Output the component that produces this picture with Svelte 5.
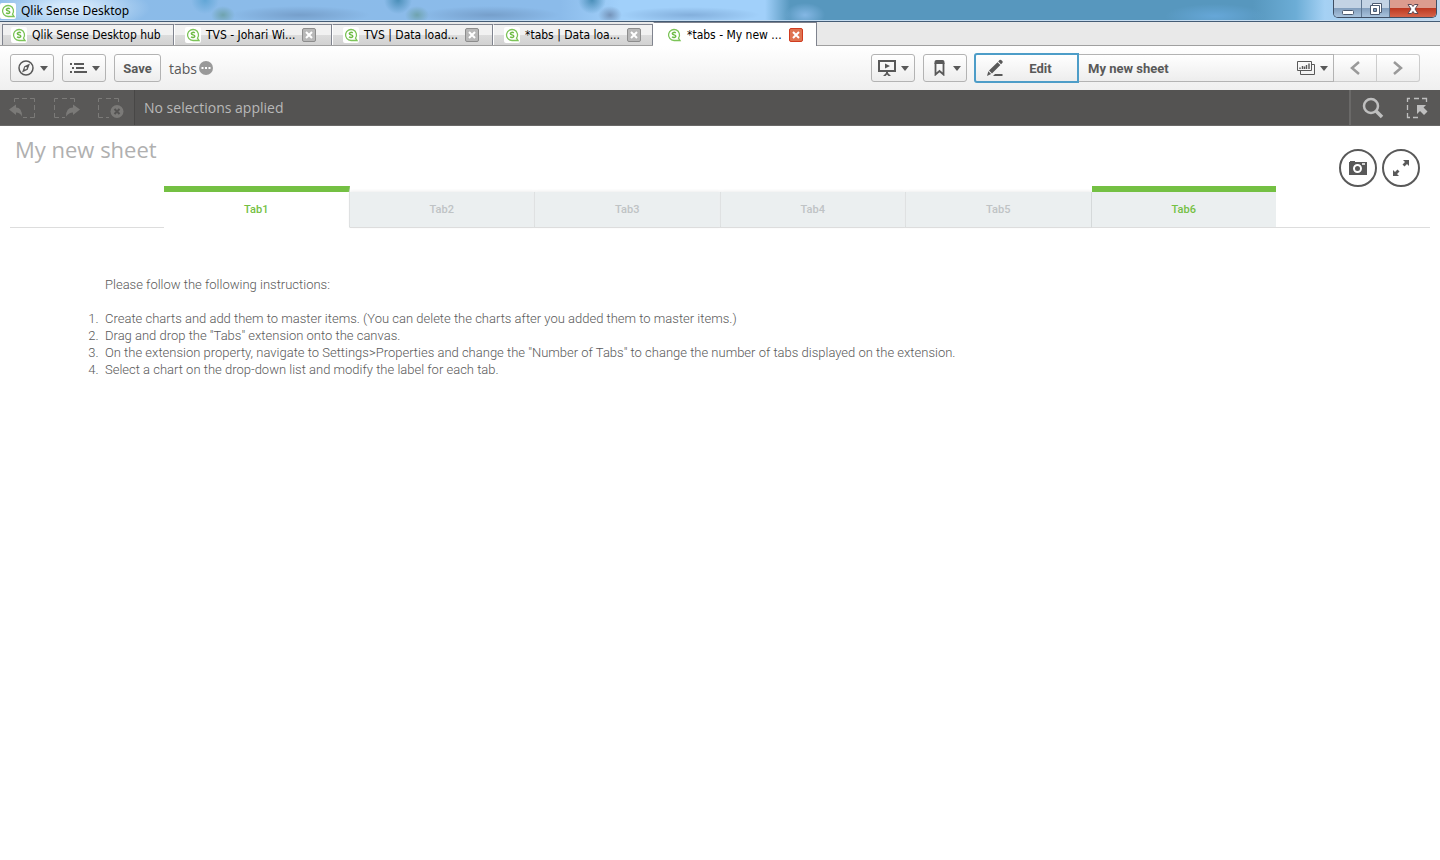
<script>
    const winTabs = [
        { label: "Qlik Sense Desktop hub", width: 172 },
        { label: "TVS - Johari Wi...", width: 158, close: true },
        { label: "TVS | Data load...", width: 161, close: true },
        { label: "*tabs | Data loa...", width: 160, close: true },
        { label: "*tabs - My new ...", width: 164, close: true, active: true },
    ];
    const sheetTabs = ["Tab1", "Tab2", "Tab3", "Tab4", "Tab5", "Tab6"];
    const steps = [
        "Create charts and add them to master items. (You can delete the charts after you added them to master items.)",
        'Drag and drop the "Tabs" extension onto the canvas.',
        'On the extension property, navigate to Settings>Properties and change the "Number of Tabs" to change the number of tabs displayed on the extension.',
        "Select a chart on the drop-down list and modify the label for each tab.",
    ];
    let selected = $state("Tab1");
    let hovered = $state("Tab6");
</script>

{#snippet logo()}
    <svg width="16" height="16" viewBox="0 0 16 16" aria-hidden="true">
        <rect width="16" height="16" rx="2" fill="#fff" />
        <path d="M14 13.500H8A5.500 5.500 0 1 1 12.500 11.200L14 13.500Z" fill="none" stroke="#7cc458" stroke-width="1.300" />
        <path d="M9.800 5.900C8.600 5 6.300 5.200 6.300 6.600c0 1.600 3.500.9 3.500 2.600 0 1.500-2.600 1.600-3.700.6" fill="none" stroke="#6cbb43" stroke-width="1.500" />
    </svg>
{/snippet}

{#snippet caret()}
    <svg width="8" height="5" viewBox="0 0 8 5" aria-hidden="true"><path d="M0 0h8L4 5z" fill="#595959" /></svg>
{/snippet}

<header class="titlebar">
    {@render logo()}
    <span class="title">Qlik Sense Desktop</span>
    <div class="controls">
        <button aria-label="Minimize">
            <svg width="14" height="14" viewBox="0 0 14 14"><rect x="1.500" y="8.500" width="11" height="4" rx="1" fill="#fff" stroke="#4d5b70" /></svg>
        </button>
        <button aria-label="Restore">
            <svg width="14" height="14" viewBox="0 0 14 14">
                <path d="M3.500 1.500h9v9h-9z" fill="#fff" stroke="#4d5b70" />
                <path d="M1.500 3.500h9v9h-9z" fill="#fff" stroke="#4d5b70" />
                <path d="M4.500 6.500h3v3h-3z" fill="#7f9dbd" stroke="#4d5b70" />
            </svg>
        </button>
        <button class="exit" aria-label="Close">
            <svg width="14" height="14" viewBox="0 0 14 14"><path d="M2 2.500h3.500L7 4.500l1.500-2H12L9 7l3 4.500H8.500L7 9.500l-1.500 2H2L5 7z" fill="#fff" stroke="#5c4a55" /></svg>
        </button>
    </div>
</header>

<nav class="wintabs">
    {#each winTabs as tab}
        <div class="wintab" class:active={tab.active} style="width: {tab.width}px">
            {@render logo()}
            <a href="#top">{tab.label}</a>
            {#if tab.close}
                <button aria-label="Close tab">
                    <svg width="8" height="8" viewBox="0 0 8 8"><path d="M1 1l6 6M7 1L1 7" stroke="#fff" stroke-width="2" /></svg>
                </button>
            {/if}
        </div>
    {/each}
</nav>

<div class="toolbar">
    <button class="btn" aria-label="Navigation">
        <svg width="16" height="16" viewBox="0 0 16 16">
            <circle cx="8" cy="8" r="7" fill="none" stroke="#595959" stroke-width="1.500" />
            <path d="M12 3.500L9.700 9.700 4 12.500l2.300-6.200z" fill="#595959" />
            <path d="M7 7l2 .3-.4 1.700-2 .6z" fill="#f4f4f4" />
        </svg>
        {@render caret()}
    </button>
    <button class="btn" aria-label="Menu">
        <svg width="18" height="12" viewBox="0 0 18 12">
            <path d="M0 2h2M4 2h10M2 6h2M6 6h8M0 10h2M4 10h13" stroke="#595959" stroke-width="2" />
        </svg>
        {@render caret()}
    </button>
    <button class="btn save">Save</button>
    <span class="appname">
        tabs
        <svg width="14" height="14" viewBox="0 0 14 14" aria-hidden="true">
            <circle cx="7" cy="7" r="7" fill="#999" />
            <path d="M2.500 6h2v2h-2zM6 6h2v2H6zM9.500 6h2v2h-2z" fill="#fff" />
        </svg>
    </span>
    <button class="btn story" aria-label="Stories">
        <svg width="18" height="16" viewBox="0 0 18 16">
            <path d="M1 1h16v10H1z" fill="none" stroke="#595959" stroke-width="2" />
            <path d="M7 3.500l5 2.500-5 2.500zM8 11h2v2l3 3h-2.500L9 14.500 7.500 16H5l3-3z" fill="#595959" />
        </svg>
        {@render caret()}
    </button>
    <button class="btn bookmark" aria-label="Bookmarks">
        <svg width="11" height="16" viewBox="0 0 11 16">
            <path d="M1.500 3v11.500l4-3.500 4 3.500V3" fill="none" stroke="#595959" stroke-width="1.800" />
            <path d="M.5 4V2q0-2 2-2h6q2 0 2 2v2z" fill="#595959" />
        </svg>
        {@render caret()}
    </button>
    <div class="sheetnav">
        <button class="edit">
            <svg width="18" height="18" viewBox="0 0 18 18" aria-hidden="true">
                <path d="M13.500 1q1-.8 2 .2l.8.8q1 1 0 2L15 5.300 12.200 2.500zM11.500 3.200l2.900 2.900L6 14.500l-3-3zM2.300 12.300l2.800 2.800L1 17zM7 17l2-2h7.500v2z" fill="#595959" />
            </svg>
            <span>Edit</span>
        </button>
        <button class="sheet">
            <span>My new sheet</span>
            <svg width="18" height="14" viewBox="0 0 18 14" aria-hidden="true">
                <path d="M.5.500h14v9H.5zM15 3.500h2.500v10h-14V10" fill="none" stroke="#595959" />
                <path d="M3 8V6.500M5.500 8V5M7.500 8V5.500M9.500 8V4M12 8V2.500" stroke="#595959" stroke-width="1.400" />
            </svg>
            {@render caret()}
        </button>
        <button class="step" aria-label="Previous sheet">
            <svg width="10" height="14" viewBox="0 0 10 14"><path d="M9 1L2 7l7 6" fill="none" stroke="#999" stroke-width="2.500" /></svg>
        </button>
        <button class="step" aria-label="Next sheet">
            <svg width="10" height="14" viewBox="0 0 10 14"><path d="M1 1l7 6-7 6" fill="none" stroke="#999" stroke-width="2.500" /></svg>
        </button>
    </div>
</div>

<div class="selections">
    <div class="history">
        <button aria-label="Step back">
            <svg width="28" height="22" viewBox="0 0 28 22">
                <path d="M5.500 5V1.500H10M13 1.500h5M21 1.500h4.500V5M25.500 8v5M25.500 16v4.500H21M18 20.500h-4" fill="none" stroke="#7b7a78" />
                <path d="M0 12.500L7 7.500v3q6 0 6 9-2-4-6-4v2.500z" fill="#7b7a78" />
            </svg>
        </button>
        <button aria-label="Step forward">
            <svg width="28" height="22" viewBox="0 0 28 22">
                <path d="M5 1.500H1.500V5M1.500 8v5M1.500 16v4.500H6M9 1.500h5M17 1.500h4.500V5M9 20.500h3" fill="none" stroke="#7b7a78" />
                <path d="M27 12.500L20 7.500v3q-7 0-7 9 3-4 7-4v2.500z" fill="#7b7a78" />
            </svg>
        </button>
        <button aria-label="Clear all selections">
            <svg width="28" height="22" viewBox="0 0 28 22">
                <path d="M5 1.500H1.500V5M1.500 8v5M1.500 16v4.500H6M9 1.500h5M17 1.500h4.500V5M9 20.500h3" fill="none" stroke="#7b7a78" />
                <circle cx="20" cy="14.500" r="6.500" fill="#7b7a78" />
                <path d="M17.500 12l5 5M22.500 12l-5 5" stroke="#545352" stroke-width="2" />
            </svg>
        </button>
    </div>
    <span class="status">No selections applied</span>
    <div class="tools">
        <button aria-label="Search">
            <svg width="22" height="22" viewBox="0 0 22 22">
                <circle cx="9" cy="9" r="7" fill="none" stroke="#bfbfbf" stroke-width="2.500" />
                <path d="M14 14l6 6" stroke="#bfbfbf" stroke-width="3.500" />
            </svg>
        </button>
        <button aria-label="Selections tool">
            <svg width="22" height="22" viewBox="0 0 22 22">
                <path d="M4 1.500H1.500V5M1.500 8v5M1.500 16v4.500H4M8 1.500h5M16 1.500h4.500V5M7 20.500h5" fill="none" stroke="#bfbfbf" stroke-width="1.300" />
                <path d="M11 8h9l-2.500 2.500 4 4-3.500 3.500-4-4L11 17z" fill="#bfbfbf" />
            </svg>
        </button>
    </div>
</div>

<main>
    <h1>My new sheet</h1>
    <div class="object">
        <div class="actions">
            <button aria-label="Take snapshot">
                <svg width="18" height="14" viewBox="0 0 18 14">
                    <path d="M0 1h1V0h5v1h12v13H0z" fill="#595959" />
                    <circle cx="8.500" cy="7.500" r="3.500" fill="none" stroke="#fff" stroke-width="2" />
                    <path d="M13 3h3" stroke="#fff" stroke-width="1.500" />
                </svg>
            </button>
            <button aria-label="Full screen">
                <svg width="16" height="16" viewBox="0 0 16 16">
                    <path d="M10 0h6v6l-2-2-2.500 2.500-2-2L12 2zM6 16H0v-6l2 2 2.500-2.500 2 2L4 14z" fill="#595959" />
                </svg>
            </button>
        </div>
        <div class="tabrow">
            {#each sheetTabs as tab}
                <button
                    class="tab"
                    class:selected={selected === tab}
                    class:hovered={hovered === tab}
                    onclick={() => (selected = tab)}
                    onmouseenter={() => (hovered = tab)}
                >
                    {tab}
                </button>
            {/each}
        </div>
        <div class="help">
            <p>Please follow the following instructions:</p>
            <ol>
                {#each steps as step}
                    <li>{step}</li>
                {/each}
            </ol>
        </div>
    </div>
</main>

<style>
    :global(body) {
        background: #fff;
        color: #595959;
        font-family: Roboto, "Open Sans", sans-serif;
        font-size: 13px;
    }

    button {
        margin: 0;
        padding: 0;
        border: 0;
        background: none;
        color: inherit;
        font: inherit;
    }

    svg {
        display: block;
        flex: none;
    }

    .titlebar {
        display: flex;
        align-items: center;
        height: 22px;
        border-bottom: 1px solid #445c75;
        box-sizing: border-box;
        /* blurred glass over the window behind */
        background:
            linear-gradient(transparent 20px, #c5dcf0 20px),
            radial-gradient(ellipse 80px 24px at 70px 8px, #d3e8fb 20%, transparent),
            radial-gradient(ellipse 12px 9px at 223px 15px, #6fa3ae, transparent),
            radial-gradient(ellipse 70px 9px at 300px 15px, #769fcb, transparent),
            radial-gradient(ellipse 12px 9px at 417px 15px, #6fa3ae, transparent),
            radial-gradient(ellipse 70px 9px at 490px 15px, #769fcb, transparent),
            radial-gradient(ellipse 12px 9px at 610px 15px, #7594ba, transparent),
            radial-gradient(ellipse 70px 8px at 690px 15px, #83afdc, transparent),
            radial-gradient(ellipse 14px 14px at 205px 0, #62a6d6, transparent),
            radial-gradient(ellipse 14px 14px at 398px 0, #4b8fb9, transparent),
            radial-gradient(ellipse 14px 14px at 592px 0, #4b8fb9, transparent),
            radial-gradient(ellipse 20px 12px at 805px 15px, #84b7e4, transparent),
            radial-gradient(ellipse 50px 12px at 1215px 16px, #66a7d8, transparent),
            linear-gradient(90deg, transparent 87%, #6cadd6 90%, #a5d1f4 92%, #a9c9e4 96%, #c0daf0),
            linear-gradient(90deg, #8bbbe8 0, #8bbbea 560px, #a1d0fa 620px, #a1d0fa 765px, #5797be 790px);
        color: #000;
        font-family: "Noto Sans", sans-serif;
        font-size: 12px;
    }

    .title {
        margin-left: 5px;
    }

    .controls {
        display: flex;
        align-self: flex-start;
        margin-left: auto;
        margin-right: 3px;
        height: 18px;
        border: 1px solid #3e4e63;
        border-top: 0;
        border-radius: 0 0 5px 5px;
        box-sizing: border-box;
        overflow: hidden;
    }

    .controls button {
        display: flex;
        align-items: center;
        justify-content: center;
        width: 28px;
        border-right: 1px solid #5d7590;
        box-sizing: border-box;
        background: linear-gradient(#c3d3e4 45%, #839fbd 50%, #a9c3dd);
    }

    .controls .exit {
        width: 46px;
        border-right: 0;
        background: linear-gradient(#dc9c8e 45%, #bd3a22 50%, #d5634a);
    }

    .wintabs {
        display: flex;
        align-items: flex-end;
        height: 24px;
        padding-left: 2px;
        border-bottom: 1px solid #a0a0a0;
        box-sizing: border-box;
        background: #e9e9e9;
        color: #000;
        font-family: "DejaVu Sans Condensed", "DejaVu Sans", sans-serif;
        font-size: 12px;
    }

    .wintab {
        display: flex;
        align-items: center;
        gap: 5px;
        height: 21px;
        padding-left: 10px;
        border: 1px solid #7f838e;
        border-bottom: 0;
        border-left-color: #fff;
        box-sizing: border-box;
        background: linear-gradient(#f1f1f1 50%, #dcdcdc 50%, #d2d2d2);
    }

    .wintab:first-child {
        padding-left: 8px;
        border-left-color: #7f838e;
    }

    .wintab.active {
        height: 24px;
        margin-bottom: -1px;
        padding-left: 12px;
        background: #fff;
    }

    .wintab a {
        color: inherit;
        text-decoration: none;
        white-space: nowrap;
    }

    .wintab button {
        display: flex;
        align-items: center;
        justify-content: center;
        width: 14px;
        height: 14px;
        margin-left: 2px;
        border: 1px solid #8d8d8d;
        border-radius: 2px;
        box-sizing: border-box;
        background: #b8b8b8;
    }

    .wintab.active button {
        border-color: #d03c20;
        background: #df7350;
    }

    .toolbar {
        display: flex;
        align-items: center;
        height: 44px;
        padding: 0 20px 0 10px;
        background: linear-gradient(#fff, #efefef);
        font-weight: bold;
    }

    .btn {
        display: flex;
        align-items: center;
        justify-content: space-between;
        width: 44px;
        height: 28px;
        margin-right: 8px;
        padding: 0 5px 0 7px;
        border: 1px solid #b3b3b3;
        border-radius: 3px;
        box-sizing: border-box;
        background: linear-gradient(#fff, #ededed);
    }

    .btn.save {
        justify-content: center;
        width: 47px;
        padding: 0;
    }

    .btn.story {
        margin-left: auto;
        padding-left: 6px;
    }

    .btn.bookmark {
        padding-left: 10px;
    }

    .appname {
        display: flex;
        align-items: center;
        gap: 2px;
        font-family: "Open Sans", sans-serif;
        font-size: 14px;
        font-weight: normal;
    }

    .sheetnav {
        display: flex;
        align-items: center;
    }

    .sheetnav button {
        display: flex;
        align-items: center;
        height: 28px;
        border: 1px solid #b3b3b3;
        border-left: 0;
        box-sizing: border-box;
        background: linear-gradient(#fff, #ededed);
    }

    .sheetnav .edit {
        width: 105px;
        height: 30px;
        padding-left: 10px;
        border: 2px solid #4d9dc8;
        border-radius: 3px 0 0 3px;
        margin-left: -1px;
    }

    .edit span {
        flex: 1;
        text-align: center;
    }

    .sheetnav .sheet {
        width: 255px;
        padding: 0 5px 0 9px;
        gap: 5px;
    }

    .sheet span {
        flex: 1;
        text-align: left;
    }

    .sheetnav .step {
        justify-content: center;
        width: 43px;
        border-color: #ccc;
    }

    .sheetnav .step:last-child {
        border-radius: 0 3px 3px 0;
    }

    .selections {
        display: flex;
        align-items: center;
        height: 36px;
        border-bottom: 1px solid #6a6968;
        box-sizing: border-box;
        background: #545352;
        color: #b8b8b8;
    }

    .history,
    .tools {
        display: flex;
        align-items: center;
        height: 35px;
        box-sizing: border-box;
        background: #595857;
    }

    .history {
        width: 135px;
        gap: 16px;
        padding-left: 9px;
        border-right: 1px solid #484746;
    }

    .tools {
        width: 91px;
        gap: 22px;
        margin-left: auto;
        padding-left: 11px;
        border-left: 2px solid #6a6968;
    }

    .status {
        margin-left: 9px;
        font-family: "Open Sans", sans-serif;
        font-size: 14px;
    }

    main {
        padding: 0 10px;
    }

    h1 {
        margin: 0 0 2px;
        padding-left: 5px;
        color: #b0b0b0;
        font-family: "Open Sans", sans-serif;
        font-size: 22px;
        font-weight: normal;
        line-height: 46px;
    }

    .object {
        position: relative;
    }

    .actions {
        position: absolute;
        top: -25px;
        right: 10px;
        display: flex;
        gap: 5px;
    }

    .actions button {
        display: flex;
        align-items: center;
        justify-content: center;
        width: 38px;
        height: 38px;
        border: 2px solid #595959;
        border-radius: 50%;
        box-sizing: border-box;
        background: #fff;
    }

    .tabrow {
        display: flex;
        justify-content: center;
        align-items: flex-end;
        height: 54px;
        padding: 0 154px;
        border-bottom: 1px solid #ddd;
        box-sizing: border-box;
    }

    .tab {
        flex: 1;
        height: 36px;
        border-right: 1px solid #d5d9da;
        border-bottom: 1px solid #ddd;
        margin-bottom: -1px;
        box-sizing: border-box;
        background: #ebeff0;
        color: #bfc3c5;
        font-size: 11px;
        font-weight: 500;
        box-shadow: 0 -1px 3px #eee;
    }

    .tab:last-child {
        border-right: 0;
    }

    .tab.selected,
    .tab.hovered {
        height: 42px;
        border-top: 6px solid #74c043;
        color: #74c043;
        box-shadow: none;
    }

    .tab.selected {
        border-bottom-color: #fff;
        background: #fff;
    }

    .help {
        padding: 48px 0 0 95px;
        font-weight: 300;
        line-height: 17px;
    }

    p {
        margin: 0 0 17px;
    }

    ol {
        margin: 0;
        padding: 0;
    }

    li::marker {
        content: counter(list-item) ".\00a0\00a0";
    }
</style>
